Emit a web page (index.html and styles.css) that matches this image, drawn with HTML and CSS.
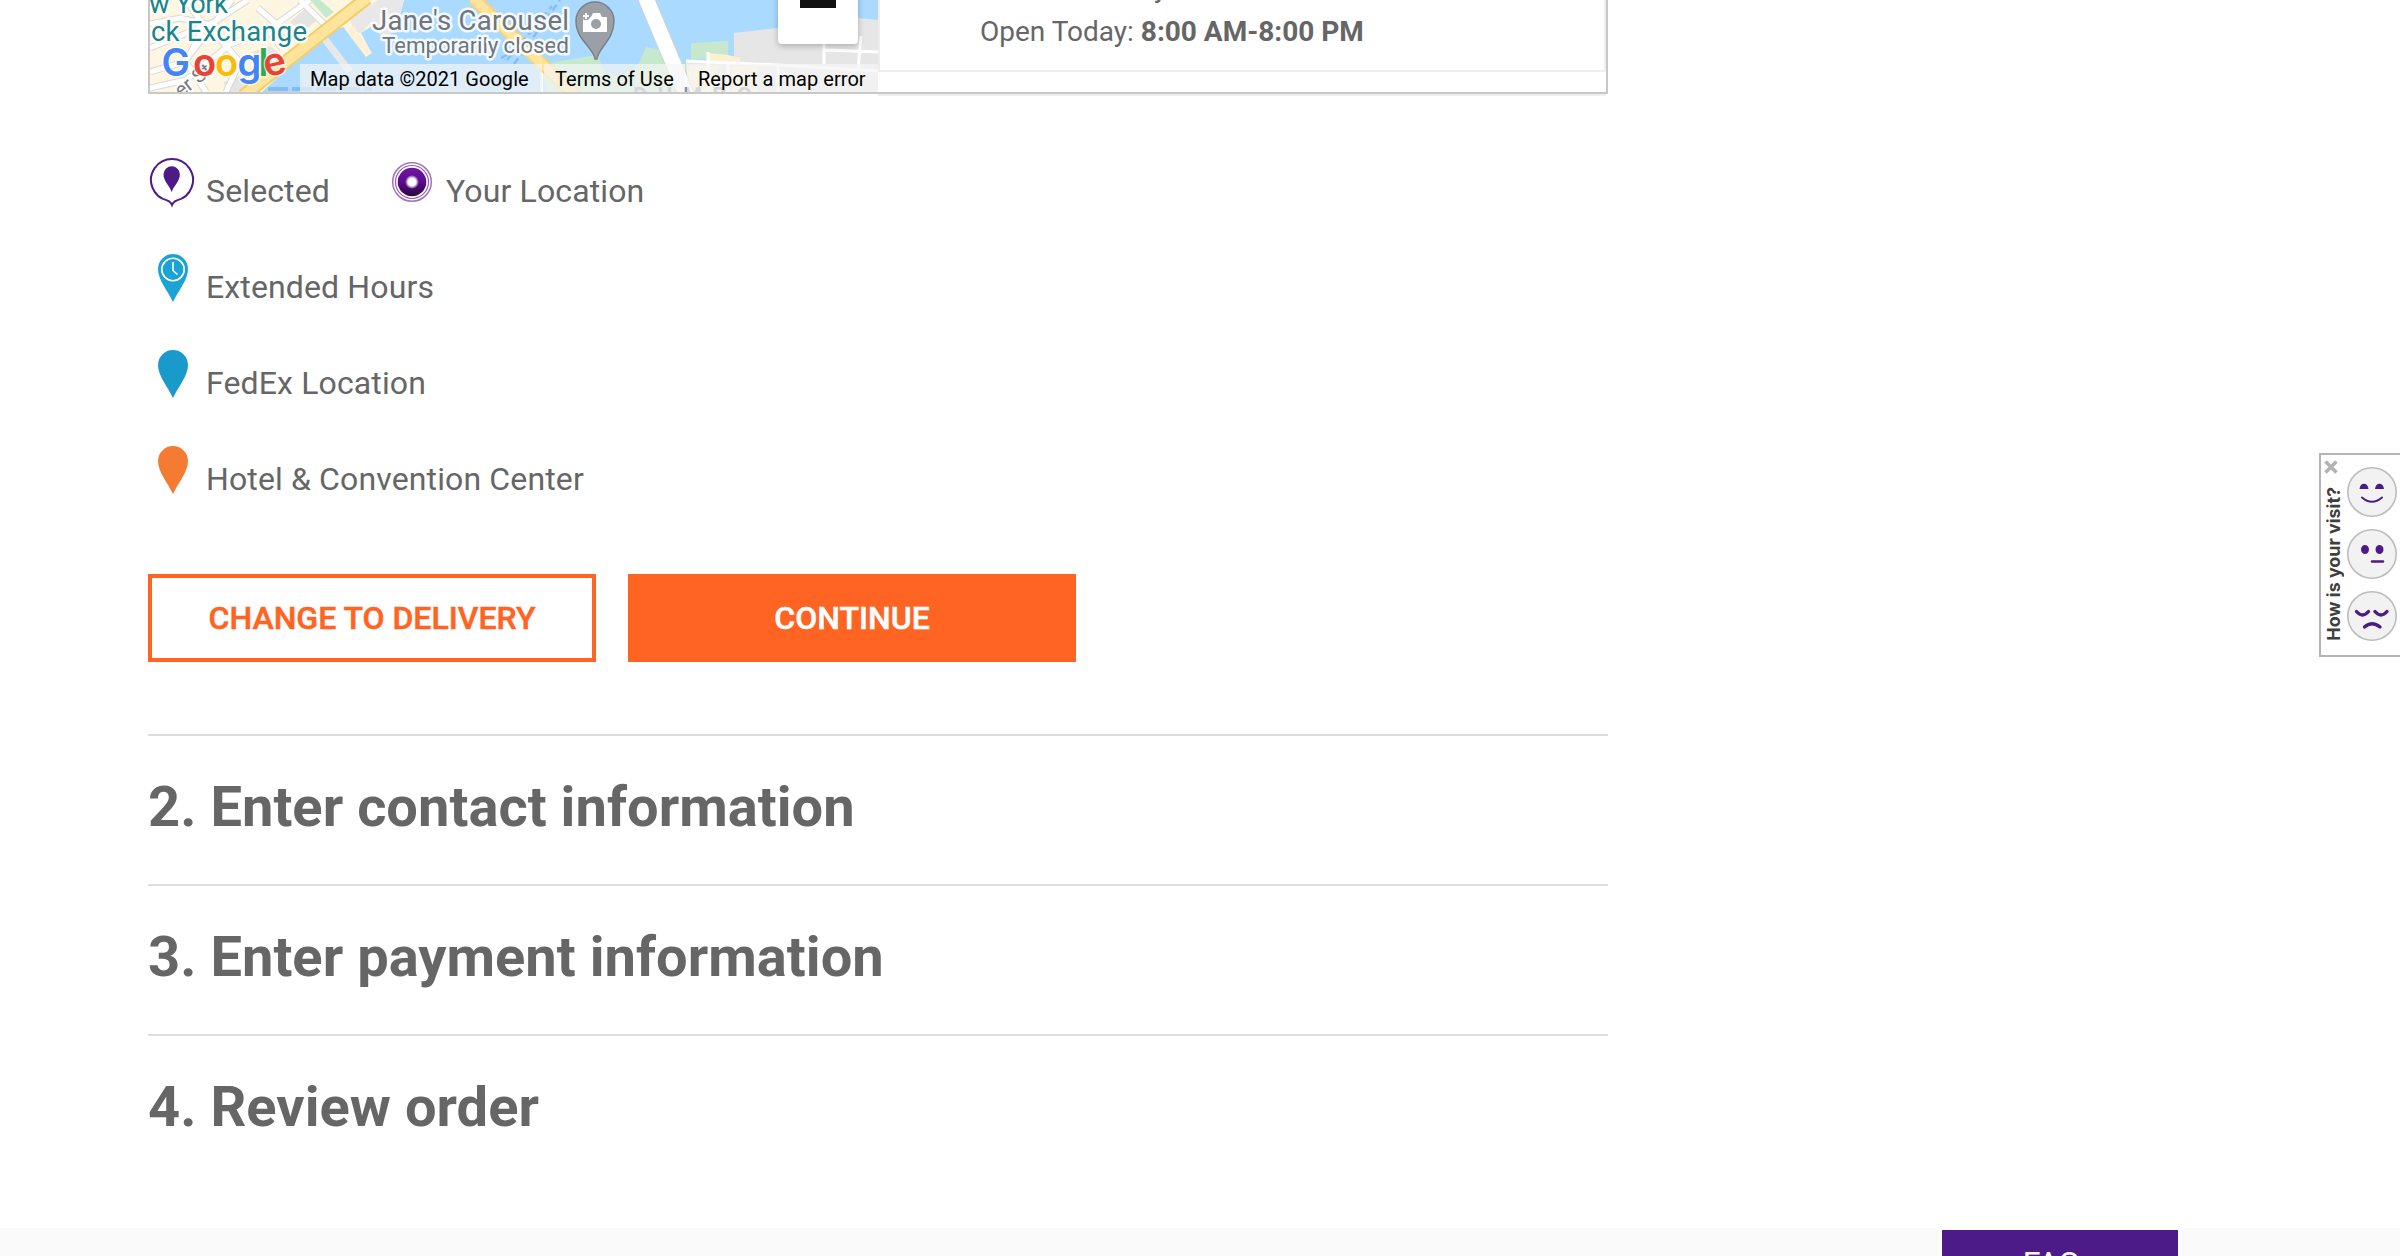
FILE: index.html
```html
<!DOCTYPE html>
<html lang="en">
<head>
<meta charset="utf-8">
<title>Pickup location</title>
<link rel="stylesheet" href="styles.css">
</head>
<body>
<main class="content">
  <section class="locator">
    <div class="map">
      <svg class="map-art" viewBox="150 0 728 92" width="728" height="92">
        <rect x="150" width="728" height="92" fill="#aadaff"/>
        <path d="M150 0H404L396 30 384 38 372 26 361 33 371 52 366 56 344 27 328 31 262 92H150Z" fill="#fef6e0"/>
        <path d="M350 18 378 0H404L396 30 384 38 371 22 361 33 354 34Z" fill="#e8e8e8"/>
        <path d="M344 28 354 26 372 53 366 57Z" fill="#fef1d5"/>
        <path d="M290 22 306 8 320 18 302 32ZM252 52 270 46 280 54 262 66ZM224 82 240 76 248 84 240 92H226Z" fill="#e4e4e4"/>
        <path d="M310 0H320L334 12 326 18Z" fill="#c6e9cd"/>
        <g fill="none" stroke="#d8d8d8" stroke-width="7">
          <path d="M150 48 214 22 248 0M150 72 184 62 206 34 232 0M150 24 180 18 206 24 226 46 268 30 310 0M186 0 204 26 186 62 206 92M226 46 240 62 226 92M268 30 282 48M300 0 326 26M258 8 290 36M150 88 186 80 228 46"/>
        </g>
        <g fill="none" stroke="#fff" stroke-width="5">
          <path d="M150 48 214 22 248 0M150 72 184 62 206 34 232 0M150 24 180 18 206 24 226 46 268 30 310 0M186 0 204 26 186 62 206 92M226 46 240 62 226 92M268 30 282 48M300 0 326 26M258 8 290 36M150 88 186 80 228 46"/>
        </g>
        <path d="M324 38 350 72" stroke="#e8e8e8" stroke-width="7"/>
        <path d="M243 96 316 38 367 -2" fill="none" stroke="#f4cd68" stroke-width="14"/>
        <path d="M243 96 316 38 367 -2" fill="none" stroke="#ffe49b" stroke-width="10"/>
        <path d="M540 66 560 61 597 55 606 74 620 76 638 66 646 47 662 50 672 70 690 61H878V92H548Z" fill="#c6e9cd"/>
        <path d="M691 43 728 41V56L691 60Z" fill="#c6e9cd"/>
        <path d="M734 33 778 28 858 18 878 20V92H686V61L734 60Z" fill="#e6e6e6"/>
        <path d="M708 53 728 55 740 58V62H708Z" fill="#fdf0cf"/>
        <path d="M689 66H718V92H689ZM732 66H758V92H732Z" fill="#fdf0cf"/>
        <path d="M686 61 778 65 878 71M824 44V64M825 50 878 52M861 36 858 70M708 52V92M728 64V92M778 66V92M542 62V92" fill="none" stroke="#fff" stroke-width="3"/>
        <path d="M473 -2 576 96" stroke="#fad374" stroke-width="13"/>
        <path d="M473 -2 576 96" stroke="#ffe49b" stroke-width="9"/>
        <path d="M645 -4 687 96" stroke="#ccd2d6" stroke-width="17"/>
        <path d="M645 -4 687 96" stroke="#fff" stroke-width="15"/>
        <path d="M507 60 552 6M514 64 560 0M501 58 516 50" stroke="#8abdf5" stroke-width="2.500" stroke-dasharray="7 4"/>
        <path d="M268 89H372" stroke="#89bbf3" stroke-width="4" stroke-dasharray="20 4"/>
        <g class="map-label">
          <text class="place place-teal" x="149" y="13" textLength="79">w York</text>
          <text class="place place-teal" x="151" y="41" textLength="156">ck Exchange</text>
          <text class="place" x="372" y="30" textLength="197">Jane's Carousel</text>
          <text class="place place-note" x="382" y="53" textLength="187">Temporarily closed</text>
          <text class="street" transform="translate(181 98) rotate(-38)">er St</text>
        </g>
        <text class="district" x="633" y="103" textLength="119">DUMBO</text>
        <path d="M595 59C594 48 576 40 576 21A19 19 0 0 1 614 21C614 40 598 48 597 59Z" fill="#9aa0a6" stroke="#7b8086" stroke-width="1.500"/>
        <path d="M583 17H591L593 13H600L602 17H607V32H583Z" fill="#fff"/>
        <path d="M586 12V20M582 16H590" stroke="#9aa0a6" stroke-width="5"/>
        <path d="M586 13V19M583 16H589" stroke="#fff" stroke-width="2"/>
        <circle cx="596" cy="24" r="5" fill="#9aa0a6"/>
        <text class="brand" y="76"><tspan x="161.500" fill="#4285f4">G</tspan><tspan x="193" fill="#ea4335">o</tspan><tspan x="215" fill="#fbbc05">o</tspan><tspan x="237.500" fill="#4285f4">g</tspan><tspan x="258.500" fill="#34a853">l</tspan><tspan x="266" y="77" rotate="-12" fill="#ea4335">e</tspan></text>
      </svg>
      <div class="zoom-control"><span class="zoom-minus"></span></div>
      <div class="attribution">
        <span class="credit credit-data">Map data ©2021 Google</span>
        <span class="credit credit-terms">Terms of Use</span>
        <span class="credit credit-report">Report a map error</span>
      </div>
    </div>
    <div class="results">
      <div class="result-card">
        <div class="hours-prev">y</div>
        <div class="hours">Open Today: <b>8:00 AM-8:00 PM</b></div>
      </div>
    </div>
  </section>

  <ul class="legend">
    <li class="legend-row">
      <svg class="legend-icon" width="58" height="96" viewBox="0 0 58 96"><path d="M24 62C23 59.500 21.500 58.200 19 57.400A21 21 0 1 1 29 57.400C26.500 58.200 25 59.500 24 62Z" fill="#fff" stroke="#4d1b88" stroke-width="2"/><path d="M23.700 49C22 43.500 15.500 38 15.500 31.500A8.200 8.200 0 0 1 31.900 31.500C31.900 38 25.400 43.500 23.700 49Z" fill="#4d1b88"/></svg>
      <span class="legend-text">Selected</span>
      <svg class="legend-icon here" width="48" height="96" viewBox="0 0 48 96">
        <defs>
          <linearGradient id="disc" x1="0" y1="0" x2="0" y2="1"><stop offset="0" stop-color="#7414a4"/><stop offset=".5" stop-color="#5b0b8c"/><stop offset="1" stop-color="#2a0540"/></linearGradient>
          <radialGradient id="glow"><stop offset=".55" stop-color="#fff"/><stop offset="1" stop-color="#fff" stop-opacity="0"/></radialGradient>
        </defs>
        <circle cx="20" cy="39" r="19.300" fill="#fff" stroke="#a472c2" stroke-width="1.500"/><circle cx="20" cy="39" r="16.500" fill="none" stroke="#9560b5" stroke-width="1.200"/><circle cx="20" cy="39" r="14.300" fill="url(#disc)"/><circle cx="20" cy="39" r="7" fill="url(#glow)"/>
      </svg>
      <span class="legend-text">Your Location</span>
    </li>
    <li class="legend-row">
      <svg class="legend-icon" width="58" height="96" viewBox="0 0 58 96"><path d="M25 63C20 52 10 41 10 30A15 15 0 0 1 40 30C40 41 30 52 25 63Z" fill="#1ba3d4"/><circle cx="25" cy="30.500" r="11.200" fill="none" stroke="#fff" stroke-width="1.600"/><path d="M25 23V31.500L29.500 35.500" fill="none" stroke="#fff" stroke-width="1.600"/></svg>
      <span class="legend-text">Extended Hours</span>
    </li>
    <li class="legend-row">
      <svg class="legend-icon" width="58" height="96" viewBox="0 0 58 96"><path d="M25 63C20 52 10 41 10 30A15 15 0 0 1 40 30C40 41 30 52 25 63Z" fill="#1a9acb"/></svg>
      <span class="legend-text">FedEx Location</span>
    </li>
    <li class="legend-row">
      <svg class="legend-icon" width="58" height="96" viewBox="0 0 58 96"><path d="M25 63C20 52 10 41 10 30A15 15 0 0 1 40 30C40 41 30 52 25 63Z" fill="#f47b31"/></svg>
      <span class="legend-text">Hotel &amp; Convention Center</span>
    </li>
  </ul>

  <div class="actions">
    <button class="button button-outline">CHANGE TO DELIVERY</button>
    <button class="button button-solid">CONTINUE</button>
  </div>

  <section class="steps">
    <h2 class="step">2. Enter contact information</h2>
    <h2 class="step">3. Enter payment information</h2>
    <h2 class="step">4. Review order</h2>
  </section>
</main>

<footer class="footer"><a class="faq">FAQs</a></footer>

<aside class="feedback">
  <div class="feedback-side">
    <svg class="close" width="14" height="14" viewBox="0 0 14 14"><path d="M1.500 1.500 12.500 12.500M12.500 1.500 1.500 12.500" stroke="#b3b3b3" stroke-width="3.600"/></svg>
    <span class="feedback-label">How is your visit?</span>
  </div>
  <div class="faces">
    <svg class="face" viewBox="0 0 50 50"><circle cx="25" cy="25" r="24.200"/><path class="fill" d="M12.500 22C13 15 21 15 21.500 22ZM28 22C28.500 15 36.500 15 37 22Z"/><path class="line" d="M15 30.500Q25 39 35 30.500" stroke-width="2"/></svg>
    <svg class="face" viewBox="0 0 50 50"><circle cx="25" cy="25" r="24.200"/><path class="fill" d="M14 20.500a4 4.500 0 1 1 8 0a4 4.500 0 1 1-8 0ZM28.500 20.500a4 4.500 0 1 1 8 0a4 4.500 0 1 1-8 0Z"/><path class="line" d="M25 32.500H36" stroke-width="2.400"/></svg>
    <svg class="face" viewBox="0 0 50 50"><circle cx="25" cy="25" r="24.200"/><path class="line" d="M9.500 20.500Q15.500 27.500 21.500 20.500M28 20.500Q34 27.500 40 20.500M17.500 36Q25 29.500 33 36" stroke-width="3.400"/></svg>
  </div>
</aside>
</body>
</html>
```
FILE: styles.css
```css
* { box-sizing: border-box; }
body { margin: 0; height: 1256px; overflow: hidden; background: #fff; color: #666; font-family: Roboto, sans-serif; }
.content { width: 1460px; margin-left: 148px; }

.locator { display: flex; height: 94px; border: solid #c8c8c8; border-width: 0 2px; }
.map { position: relative; width: 728px; height: 94px; border-bottom: 2px solid #c8c8c8; overflow: hidden; flex: none; }
.map-art { display: block; }
.map-label { paint-order: stroke; stroke: #fff; stroke-opacity: .85; stroke-width: 5px; stroke-linejoin: round; }
.place { font-size: 27.5px; fill: #6f757c; }
.place-teal { fill: #16858c; }
.place-note { font-size: 22.5px; }
.street { font-size: 20px; fill: #737983; }
.district { font-size: 22px; font-weight: 700; fill: #8791a5; }
.brand { font-family: Inter, sans-serif; font-size: 38px; font-weight: 600; paint-order: stroke; stroke: #fff; stroke-opacity: .7; stroke-width: 3px; }
.zoom-control { position: absolute; left: 628px; top: -36px; width: 80px; height: 80px; border-radius: 4px; background: #fff; box-shadow: 0 2px 6px rgba(0,0,0,.25); display: flex; justify-content: center; align-items: center; }
.zoom-minus { width: 36px; height: 8px; background: #111; }
.attribution { position: absolute; right: 0; bottom: 0; display: flex; gap: 2px; height: 28px; line-height: 30px; font-size: 20px; letter-spacing: .04px; color: #000; white-space: nowrap; }
.credit { background: rgba(245,245,245,.7); }
.credit-data { width: 242px; padding-left: 10px; }
.credit-terms { width: 141px; padding-left: 11px; }
.credit-report { width: 191px; padding-left: 11px; }

.results { flex: 1; background: #fff; border-bottom: 2px solid #c8c8c8; box-shadow: 0 2px 0 #eee; }
.result-card { height: 72px; border: solid #eee; border-width: 0 2px 2px; padding-left: 100px; font-size: 28px; overflow: hidden; }
.hours-prev { height: 16px; margin: -28px 0 0 174px; line-height: 32px; }
.hours { margin-top: 28px; line-height: 32px; }

.legend { list-style: none; margin: 49px 0 0; padding: 0; }
.legend-row { display: flex; height: 96px; line-height: 96px; font-size: 32px; letter-spacing: .13px; }
.legend-icon { display: block; flex: none; }
.here { margin-left: 62px; margin-right: 6px; }

.actions { display: flex; gap: 32px; margin-top: 47px; }
.button { width: 448px; height: 88px; padding: 0; border: 4px solid #ff6422; border-radius: 0; background: #fff; color: #ff6422; font: 500 32px/80px Roboto, sans-serif; -webkit-text-stroke: .5px currentColor; }
.button-solid { background: #ff6422; color: #fff; }

.steps { margin-top: 72px; }
.step { height: 150px; margin: 0; border-top: 2px solid #ddd; font-size: 56px; line-height: 142px; font-weight: 700; letter-spacing: .04px; }

.footer { display: flex; justify-content: flex-end; margin-top: 44px; padding-right: 220px; height: 28px; background: #fafafa; }
.faq { width: 240px; height: 60px; border: 2px solid #fff; background: #4d1b88; color: #fff; font-size: 32px; line-height: 66px; text-align: center; }

.feedback { position: fixed; right: 0; top: 453px; width: 81px; height: 204px; display: flex; border: 2px solid #b5b5b5; border-right: 0; background: #fff; }
.feedback-side { width: 26px; padding: 5px 0 0 3px; display: flex; flex-direction: column; gap: 13px; }
.close { flex: none; }
.feedback-label { writing-mode: vertical-rl; transform: rotate(180deg); width: 20px; line-height: 20px; font-family: Inter, sans-serif; font-weight: 700; font-size: 17.9px; color: #3f403c; white-space: nowrap; }
.faces { display: flex; flex-direction: column; gap: 12px; padding-top: 12px; }
.face { width: 50px; height: 50px; }
.face circle { fill: #f2f2f2; stroke: #bdbdbd; stroke-width: 1.6px; }
.fill { fill: #4d1b88; }
.line { fill: none; stroke: #4d1b88; stroke-linecap: round; }
```
